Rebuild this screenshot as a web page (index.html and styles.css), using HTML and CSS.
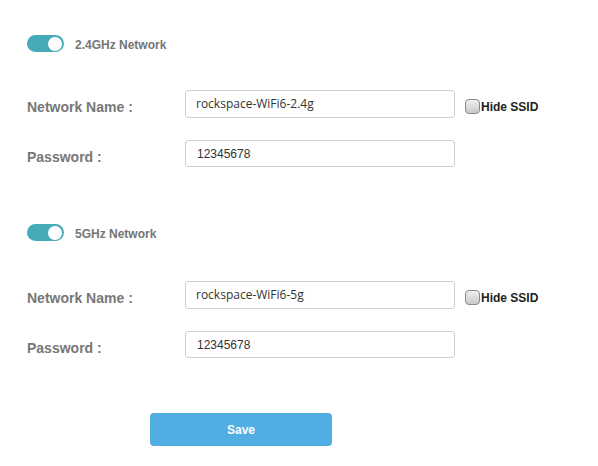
FILE: index.html
```html
<!DOCTYPE html>
<html>
<head>
<meta charset="utf-8">
<link rel="stylesheet" href="styles.css">
</head>
<body>
<div class="page">
  <section class="band band-first">
    <div class="switch-row">
      <span class="toggle"><span class="knob"></span></span>
      <span class="switch-label">2.4GHz Network</span>
    </div>
    <div class="field first-field">
      <label class="field-label">Network Name :</label>
      <div class="input name-input">rockspace-WiFi6-2.4g</div>
      <span class="check-group"><span class="check"></span><span class="check-label">Hide SSID</span></span>
    </div>
    <div class="field">
      <label class="field-label">Password :</label>
      <div class="input pass-input">12345678</div>
    </div>
  </section>
  <section class="band band-second">
    <div class="switch-row">
      <span class="toggle"><span class="knob"></span></span>
      <span class="switch-label">5GHz Network</span>
    </div>
    <div class="field first-field">
      <label class="field-label">Network Name :</label>
      <div class="input name-input">rockspace-WiFi6-5g</div>
      <span class="check-group"><span class="check"></span><span class="check-label">Hide SSID</span></span>
    </div>
    <div class="field">
      <label class="field-label">Password :</label>
      <div class="input pass-input">12345678</div>
    </div>
  </section>
  <div class="actions">
    <button class="save">Save</button>
  </div>
</div>
</body>
</html>
```

FILE: styles.css
```css
html, body {
  margin: 0;
  padding: 0;
  background: #ffffff;
}
body {
  font-family: "Liberation Sans", Arial, sans-serif;
}
.page {
  width: 598px;
  height: 466px;
  padding-left: 27px;
  box-sizing: border-box;
}
.band-first {
  padding-top: 35px;
}
.band-second {
  padding-top: 57px;
}
.switch-row {
  display: flex;
  align-items: center;
  height: 17px;
}
.toggle {
  display: flex;
  justify-content: flex-end;
  align-items: center;
  width: 37px;
  height: 17px;
  border-radius: 9px;
  background: #46abb9;
  box-sizing: border-box;
  padding-right: 1px;
}
.knob {
  width: 16px;
  height: 16px;
  border-radius: 50%;
  background: #ffffff;
  border: 1px solid #4aa9b8;
  box-sizing: border-box;
}
.switch-label {
  margin-left: 11px;
  padding-top: 3px;
  font-size: 12px;
  font-weight: bold;
  color: #757575;
}
.field {
  display: flex;
  align-items: center;
  height: 27px;
  margin-top: 23px;
}
.first-field {
  margin-top: 38px;
}
.band-second .first-field {
  margin-top: 40px;
}
.field-label {
  width: 158px;
  padding-top: 7px;
  font-size: 14px;
  font-weight: bold;
  color: #777777;
}
.input {
  width: 270px;
  height: 27px;
  box-sizing: border-box;
  border: 1px solid #cfcfcf;
  border-radius: 3px;
  padding-left: 10px;
  display: flex;
  align-items: center;
  color: #333333;
}
.name-input {
  font-family: "Open Sans", "Noto Sans", sans-serif;
  font-size: 12px;
  height: 28px;
}
.pass-input {
  font-family: "Liberation Sans", Arial, sans-serif;
  font-size: 12px;
  padding-left: 11px;
  padding-top: 1px;
}
.check-group {
  display: flex;
  align-items: center;
  padding-top: 6px;
}
.check {
  width: 15px;
  height: 15px;
  box-sizing: border-box;
  margin-left: 10px;
  border: 1px solid #8a8a8a;
  border-radius: 4px;
  background: linear-gradient(#f0f0f0, #c9c9c9);
}
.check-label {
  margin-left: 1px;
  font-size: 12px;
  font-weight: bold;
  color: #222222;
}
.actions {
  padding-top: 55px;
  padding-left: 123px;
}
.save {
  width: 182px;
  height: 33px;
  border: none;
  border-radius: 4px;
  background: #52ade2;
  color: #ffffff;
  font-family: "Liberation Sans", Arial, sans-serif;
  font-size: 12px;
  font-weight: bold;
  padding: 0;
}
```
